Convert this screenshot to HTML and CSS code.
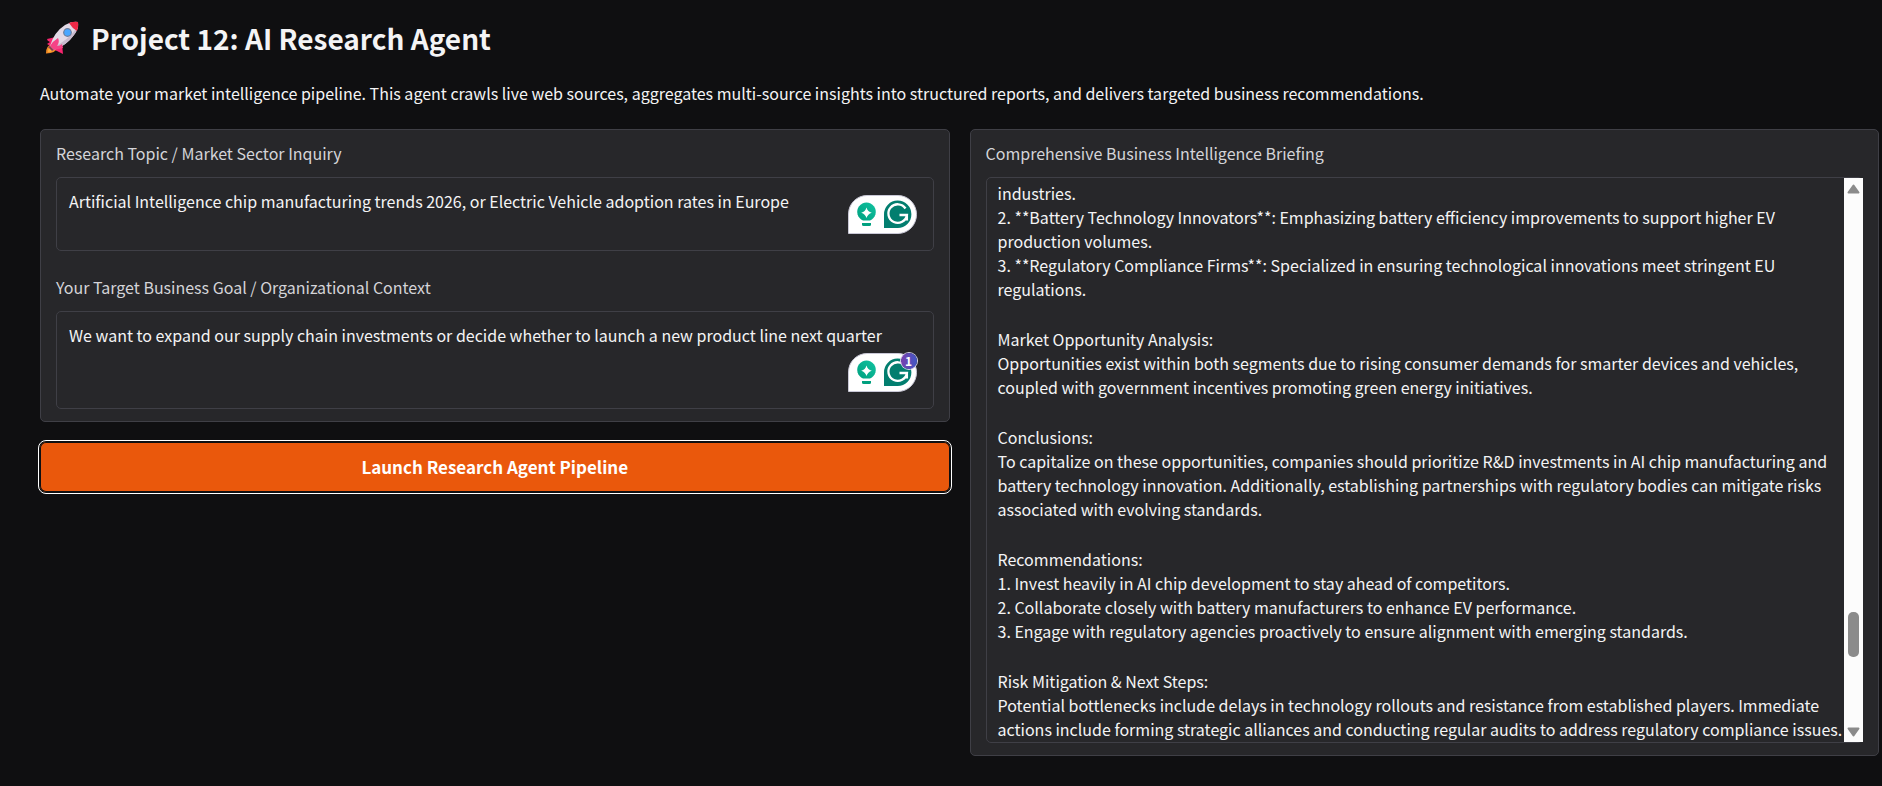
FILE: index.html
```
<!DOCTYPE html>
<html lang="en">
<head>
    <meta charset="UTF-8">
    <title>Project 12: AI Research Agent</title>
    <link rel="stylesheet" href="styles.css">
</head>
<body>
    <!-- shared icon for the writing assistant pill -->
    <svg width="0" height="0" class="sprite" aria-hidden="true">
        <defs>
            <linearGradient id="bulb-fill" x1="0" y1="1" x2="1" y2="0">
                <stop offset="0" stop-color="#00a07f"/>
                <stop offset="1" stop-color="#10c2a0"/>
            </linearGradient>
        </defs>
        <symbol id="assist-icon" viewBox="0 0 69 39">
            <path d="M.5 38.5V19A18.500 18.500 0 0 1 19 .5H50a18.500 19 0 0 1 0 38Z" fill="#fff" stroke="#c9c8d6"/>
            <path d="M15 25.500a9.300 9.300 0 1 1 7 0Z" fill="url(#bulb-fill)"/>
            <path d="M18.500 12.500q1.200 4.200 5.300 5.300-4.100 1.100-5.300 5.300-1.200-4.200-5.300-5.300 4.100-1.100 5.300-5.300Z" fill="#fff"/>
            <path d="M14 28h9v1.500q0 1.500-1.500 1.500h-6q-1.500 0-1.500-1.500Z" fill="#00a07f"/>
            <path d="M36 33V19.500A13.700 13.700 0 1 1 49.700 33Z" fill="#027e6f"/>
            <path d="M57.500 13.500a9.300 9.300 0 1 0 1.400 6.500H51.500M58.900 20v5.500" fill="none" stroke="#fff" stroke-width="2.300"/>
        </symbol>
    </svg>

    <header class="intro">
        <h1>
            <svg class="rocket" viewBox="0 0 34 34" aria-hidden="true">
                <path d="M7 23q5-1 5 4-1 5-11 5.500Q.500 25 7 23Z" fill="#f08a24"/>
                <path d="M7 25q3 0 3 3-2 3-7 3 0-5 4-6Z" fill="#ffb13d"/>
                <path d="M11 16 2 18q0 2 3 3l-3 2 7 4Z" fill="#f8256f"/>
                <path d="m17 23 1 10-6-3q-3-1-3-4Z" fill="#f8256f"/>
                <path d="M5 25Q9 11 20 4q7-4 13-3 1 6-4 13Q22 24 9 29Z" fill="#e3d9e6"/>
                <path d="M9 29Q22 24 29 14q4-5 4-9-9 14-26 22Z" fill="#c9bacd"/>
                <path d="M24 2q5-2 9-1 1 4-1 9-5-3-8-8Z" fill="#ef2847"/>
                <path d="M5 25q3-5 8-8 2 4-1 8 3 0 5-2l1 4q-4 1-9 2Z" fill="#f54386"/>
                <path d="m5 25 4 4-2 1-4-4Z" fill="#8b4058"/>
                <circle cx="22.500" cy="11.500" r="4.400" fill="#6d7d9d"/>
                <circle cx="22.500" cy="11.500" r="3.200" fill="#4aa6ff"/>
            </svg>
            Project 12: AI Research Agent
        </h1>
        <p>Automate your market intelligence pipeline. This agent crawls live web sources, aggregates multi-source insights into structured reports, and delivers targeted business recommendations.</p>
    </header>

    <main class="columns">
        <form class="column">
            <div class="panel">
                <div class="field">
                    <label for="topic">Research Topic / Market Sector Inquiry</label>
                    <div class="input-wrap">
                        <textarea id="topic" class="box" rows="2" spellcheck="false">Artificial Intelligence chip manufacturing trends 2026, or Electric Vehicle adoption rates in Europe</textarea>
                        <div class="assist">
                            <svg width="69" height="39" aria-hidden="true"><use href="#assist-icon"/></svg>
                        </div>
                    </div>
                </div>
                <div class="field">
                    <label for="goal">Your Target Business Goal / Organizational Context</label>
                    <div class="input-wrap">
                        <textarea id="goal" class="box" rows="3" spellcheck="false">We want to expand our supply chain investments or decide whether to launch a new product line next quarter</textarea>
                        <div class="assist">
                            <svg width="69" height="39" aria-hidden="true"><use href="#assist-icon"/></svg>
                            <span class="badge">1</span>
                        </div>
                    </div>
                </div>
            </div>
            <button type="button" class="launch">Launch Research Agent Pipeline</button>
        </form>

        <section class="column">
            <div class="panel">
                <div class="field">
                    <label for="briefing">Comprehensive Business Intelligence Briefing</label>
                    <div class="box report">
                        <output id="briefing" class="report-text">
                            <p>industries.<br>
                            2. **Battery Technology Innovators**: Emphasizing battery efficiency improvements to support higher EV production volumes.<br>
                            3. **Regulatory Compliance Firms**: Specialized in ensuring technological innovations meet stringent EU regulations.</p>
                            <p>Market Opportunity Analysis:<br>
                            Opportunities exist within both segments due to rising consumer demands for smarter devices and vehicles, coupled with government incentives promoting green energy initiatives.</p>
                            <p>Conclusions:<br>
                            To capitalize on these opportunities, companies should prioritize R&amp;D investments in AI chip manufacturing and battery technology innovation. Additionally, establishing partnerships with regulatory bodies can mitigate risks associated with evolving standards.</p>
                            <p>Recommendations:<br>
                            1. Invest heavily in AI chip development to stay ahead of competitors.<br>
                            2. Collaborate closely with battery manufacturers to enhance EV performance.<br>
                            3. Engage with regulatory agencies proactively to ensure alignment with emerging standards.</p>
                            <p>Risk Mitigation &amp; Next Steps:<br>
                            Potential bottlenecks include delays in technology rollouts and resistance from established players. Immediate actions include forming strategic alliances and conducting regular audits to address regulatory compliance issues.</p>
                        </output>
                        <div class="scrollbar" aria-hidden="true">
                            <svg width="13" height="10" viewBox="0 0 13 10"><path d="M6.500 1.500 11.500 8.500h-10Z" fill="#8b8b8b" stroke="#8b8b8b" stroke-width="2" stroke-linejoin="round"/></svg>
                            <div class="track">
                                <div class="before"></div>
                                <div class="thumb"></div>
                                <div class="after"></div>
                            </div>
                            <svg width="13" height="10" viewBox="0 0 13 10"><path d="M6.500 8.500 11.500 1.500h-10Z" fill="#8b8b8b" stroke="#8b8b8b" stroke-width="2" stroke-linejoin="round"/></svg>
                        </div>
                    </div>
                </div>
            </div>
        </section>
    </main>
</body>
</html>
```
FILE: styles.css
```
* {
    box-sizing: border-box;
}
body {
    background: #0f0f11;
    color: #f4f4f5;
    font-family: "Noto Sans CJK SC", "Open Sans", sans-serif;
    font-size: 16px;
    line-height: 24px;
    margin: 0;
    padding: 19px 3px 20px 40px;
}
.sprite {
    position: absolute;
}
h1 {
    display: flex;
    align-items: center;
    gap: 12px;
    margin: 0 0 24px;
    padding-left: 5px;
    font-size: 28px;
    font-weight: 700;
    line-height: 38px;
}
.rocket {
    width: 34px;
    height: 38px;
}
.intro p {
    margin: 0 0 24px;
}

/* layout */
.columns {
    display: grid;
    grid-template-columns: 1fr 1fr;
    gap: 20px;
    align-items: start;
}
.column {
    display: flex;
    flex-direction: column;
    gap: 20px;
    min-width: 0;
}
.panel {
    display: flex;
    flex-direction: column;
    gap: 24px;
    padding: 11px 15px 12px;
    background: #27272a;
    border: 1px solid #3f3f46;
    border-radius: 5px;
}

/* fields */
.field {
    display: flex;
    flex-direction: column;
    gap: 12px;
}
label {
    color: #d4d4d8;
}
.input-wrap {
    position: relative;
    display: flex;
}
.box {
    width: 100%;
    background: #27272a;
    border: 1px solid #3f3f46;
    border-radius: 5px;
}
textarea {
    padding: 11px 12px 13px;
    color: inherit;
    font: inherit;
    resize: none;
    overflow: hidden;
    outline: none;
}
.assist {
    position: absolute;
    right: 17px;
    bottom: 17px;
    display: flex;
}
.badge {
    position: absolute;
    top: 0;
    right: 0;
    width: 16px;
    height: 16px;
    border-radius: 50%;
    background: linear-gradient(90deg, #7a3fae, #4057c4);
    box-shadow: 0 0 0 1px #d9d6ea;
    color: #fff;
    font-size: 12px;
    font-weight: 700;
    line-height: 16px;
    text-align: center;
}
.launch {
    height: 50px;
    background: #ea580c;
    border: 0;
    border-radius: 6px;
    box-shadow: inset 0 0 0 1px #0f0f11;
    color: #fff;
    font: inherit;
    font-size: 17px;
    font-weight: 700;
    outline: 1px solid #fff;
    outline-offset: 1px;
}

/* report */
.report {
    display: flex;
    height: 566px;
}
.report-text {
    flex: 1;
    padding: 3px 0 0 11px;
    overflow: hidden;
}
.report-text p {
    margin: 0 0 26px;
}
.report-text p:last-child {
    margin-bottom: 0;
}
.scrollbar {
    display: flex;
    flex: none;
    flex-direction: column;
    align-items: center;
    width: 19px;
    margin-right: -1px;
    padding: 6px 0 5px;
    background: #fcfcfc;
}
.track {
    display: flex;
    flex: 1;
    flex-direction: column;
}
.before {
    flex: 6;
}
.thumb {
    width: 11px;
    height: 45px;
    border-radius: 5px;
    background: #8b8b8b;
}
.after {
    flex: 1;
}
```
